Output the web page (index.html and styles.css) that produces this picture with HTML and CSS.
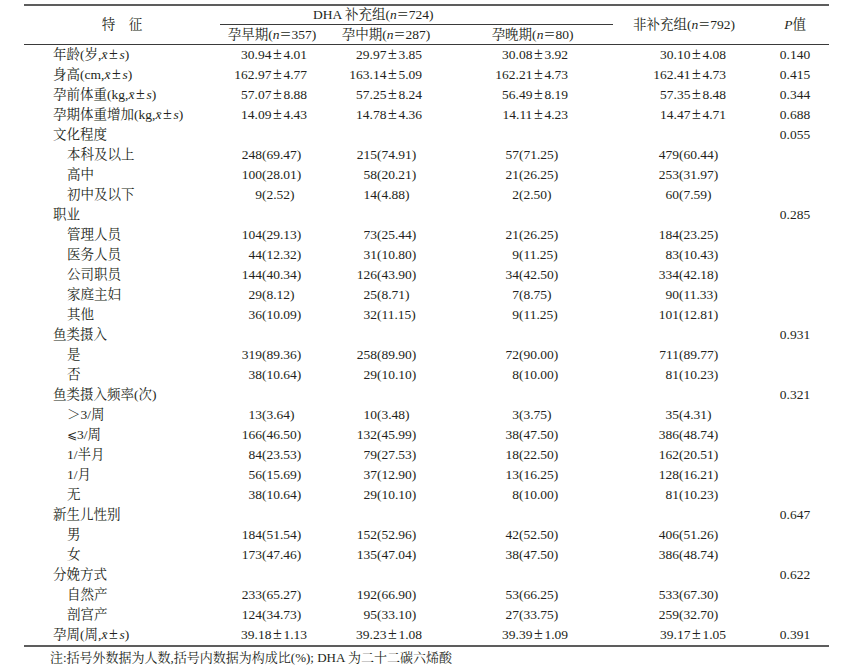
FILE: index.html
```html
<!DOCTYPE html>
<html lang="zh">
<head>
<meta charset="utf-8">
<title>表</title>
<link rel="stylesheet" href="styles.css">
</head>
<body>
<table class="tbl">
  <colgroup>
    <col class="w0"><col class="w1"><col class="w2"><col class="w3"><col class="w4"><col class="w5">
  </colgroup>
  <thead>
    <tr class="h1">
      <th rowspan="2" class="hlabel">特&emsp;征</th>
      <th colspan="3" class="hgroup">DHA 补充组(<i>n</i><span class="eq">＝</span>724)</th>
      <th rowspan="2" class="hcol4">非补充组(<i>n</i><span class="eq">＝</span>792)</th>
      <th rowspan="2" class="hp"><i>P</i>值</th>
    </tr>
    <tr class="h2">
      <th>孕早期(<i>n</i><span class="eq">＝</span>357)</th>
      <th>孕中期(<i>n</i><span class="eq">＝</span>287)</th>
      <th class="hcol3">孕晚期(<i>n</i><span class="eq">＝</span>80)</th>
    </tr>
  </thead>
  <tbody>
    <tr><td class="cat">年龄(岁,<i>x̄</i><span class="pm">±</span><i>s</i>)</td><td class="m c1">30.94<span class="pm">±</span>4.01</td><td class="m c2">29.97<span class="pm">±</span>3.85</td><td class="m c3">30.08<span class="pm">±</span>3.92</td><td class="m c4">30.10<span class="pm">±</span>4.08</td><td class="p">0.140</td></tr>
    <tr><td class="cat">身高(cm,<i>x̄</i><span class="pm">±</span><i>s</i>)</td><td class="m c1">162.97<span class="pm">±</span>4.77</td><td class="m c2">163.14<span class="pm">±</span>5.09</td><td class="m c3">162.21<span class="pm">±</span>4.73</td><td class="m c4">162.41<span class="pm">±</span>4.73</td><td class="p">0.415</td></tr>
    <tr><td class="cat">孕前体重(kg,<i>x̄</i><span class="pm">±</span><i>s</i>)</td><td class="m c1">57.07<span class="pm">±</span>8.88</td><td class="m c2">57.25<span class="pm">±</span>8.24</td><td class="m c3">56.49<span class="pm">±</span>8.19</td><td class="m c4">57.35<span class="pm">±</span>8.48</td><td class="p">0.344</td></tr>
    <tr><td class="cat">孕期体重增加(kg,<i>x̄</i><span class="pm">±</span><i>s</i>)</td><td class="m c1">14.09<span class="pm">±</span>4.43</td><td class="m c2">14.78<span class="pm">±</span>4.36</td><td class="m c3">14.11<span class="pm">±</span>4.23</td><td class="m c4">14.47<span class="pm">±</span>4.71</td><td class="p">0.688</td></tr>

    <tr><td class="cat">文化程度</td><td></td><td></td><td></td><td></td><td class="p">0.055</td></tr>
    <tr><td class="sub">本科及以上</td><td class="n c1"><span class="a">248</span><span>(69.47)</span></td><td class="n c2"><span class="a">215</span><span>(74.91)</span></td><td class="n c3"><span class="a">57</span><span>(71.25)</span></td><td class="n c4"><span class="a">479</span><span>(60.44)</span></td><td></td></tr>
    <tr><td class="sub">高中</td><td class="n c1"><span class="a">100</span><span>(28.01)</span></td><td class="n c2"><span class="a">58</span><span>(20.21)</span></td><td class="n c3"><span class="a">21</span><span>(26.25)</span></td><td class="n c4"><span class="a">253</span><span>(31.97)</span></td><td></td></tr>
    <tr><td class="sub">初中及以下</td><td class="n c1"><span class="a">9</span><span>(2.52)</span></td><td class="n c2"><span class="a">14</span><span>(4.88)</span></td><td class="n c3"><span class="a">2</span><span>(2.50)</span></td><td class="n c4"><span class="a">60</span><span>(7.59)</span></td><td></td></tr>

    <tr><td class="cat">职业</td><td></td><td></td><td></td><td></td><td class="p">0.285</td></tr>
    <tr><td class="sub">管理人员</td><td class="n c1"><span class="a">104</span><span>(29.13)</span></td><td class="n c2"><span class="a">73</span><span>(25.44)</span></td><td class="n c3"><span class="a">21</span><span>(26.25)</span></td><td class="n c4"><span class="a">184</span><span>(23.25)</span></td><td></td></tr>
    <tr><td class="sub">医务人员</td><td class="n c1"><span class="a">44</span><span>(12.32)</span></td><td class="n c2"><span class="a">31</span><span>(10.80)</span></td><td class="n c3"><span class="a">9</span><span>(11.25)</span></td><td class="n c4"><span class="a">83</span><span>(10.43)</span></td><td></td></tr>
    <tr><td class="sub">公司职员</td><td class="n c1"><span class="a">144</span><span>(40.34)</span></td><td class="n c2"><span class="a">126</span><span>(43.90)</span></td><td class="n c3"><span class="a">34</span><span>(42.50)</span></td><td class="n c4"><span class="a">334</span><span>(42.18)</span></td><td></td></tr>
    <tr><td class="sub">家庭主妇</td><td class="n c1"><span class="a">29</span><span>(8.12)</span></td><td class="n c2"><span class="a">25</span><span>(8.71)</span></td><td class="n c3"><span class="a">7</span><span>(8.75)</span></td><td class="n c4"><span class="a">90</span><span>(11.33)</span></td><td></td></tr>
    <tr><td class="sub">其他</td><td class="n c1"><span class="a">36</span><span>(10.09)</span></td><td class="n c2"><span class="a">32</span><span>(11.15)</span></td><td class="n c3"><span class="a">9</span><span>(11.25)</span></td><td class="n c4"><span class="a">101</span><span>(12.81)</span></td><td></td></tr>

    <tr><td class="cat">鱼类摄入</td><td></td><td></td><td></td><td></td><td class="p">0.931</td></tr>
    <tr><td class="sub">是</td><td class="n c1"><span class="a">319</span><span>(89.36)</span></td><td class="n c2"><span class="a">258</span><span>(89.90)</span></td><td class="n c3"><span class="a">72</span><span>(90.00)</span></td><td class="n c4"><span class="a">711</span><span>(89.77)</span></td><td></td></tr>
    <tr><td class="sub">否</td><td class="n c1"><span class="a">38</span><span>(10.64)</span></td><td class="n c2"><span class="a">29</span><span>(10.10)</span></td><td class="n c3"><span class="a">8</span><span>(10.00)</span></td><td class="n c4"><span class="a">81</span><span>(10.23)</span></td><td></td></tr>

    <tr><td class="cat">鱼类摄入频率(次)</td><td></td><td></td><td></td><td></td><td class="p">0.321</td></tr>
    <tr><td class="sub">＞3/周</td><td class="n c1"><span class="a">13</span><span>(3.64)</span></td><td class="n c2"><span class="a">10</span><span>(3.48)</span></td><td class="n c3"><span class="a">3</span><span>(3.75)</span></td><td class="n c4"><span class="a">35</span><span>(4.31)</span></td><td></td></tr>
    <tr><td class="sub"><span class="le">⩽</span>3/周</td><td class="n c1"><span class="a">166</span><span>(46.50)</span></td><td class="n c2"><span class="a">132</span><span>(45.99)</span></td><td class="n c3"><span class="a">38</span><span>(47.50)</span></td><td class="n c4"><span class="a">386</span><span>(48.74)</span></td><td></td></tr>
    <tr><td class="sub">1/半月</td><td class="n c1"><span class="a">84</span><span>(23.53)</span></td><td class="n c2"><span class="a">79</span><span>(27.53)</span></td><td class="n c3"><span class="a">18</span><span>(22.50)</span></td><td class="n c4"><span class="a">162</span><span>(20.51)</span></td><td></td></tr>
    <tr><td class="sub">1/月</td><td class="n c1"><span class="a">56</span><span>(15.69)</span></td><td class="n c2"><span class="a">37</span><span>(12.90)</span></td><td class="n c3"><span class="a">13</span><span>(16.25)</span></td><td class="n c4"><span class="a">128</span><span>(16.21)</span></td><td></td></tr>
    <tr><td class="sub">无</td><td class="n c1"><span class="a">38</span><span>(10.64)</span></td><td class="n c2"><span class="a">29</span><span>(10.10)</span></td><td class="n c3"><span class="a">8</span><span>(10.00)</span></td><td class="n c4"><span class="a">81</span><span>(10.23)</span></td><td></td></tr>

    <tr><td class="cat">新生儿性别</td><td></td><td></td><td></td><td></td><td class="p">0.647</td></tr>
    <tr><td class="sub">男</td><td class="n c1"><span class="a">184</span><span>(51.54)</span></td><td class="n c2"><span class="a">152</span><span>(52.96)</span></td><td class="n c3"><span class="a">42</span><span>(52.50)</span></td><td class="n c4"><span class="a">406</span><span>(51.26)</span></td><td></td></tr>
    <tr><td class="sub">女</td><td class="n c1"><span class="a">173</span><span>(47.46)</span></td><td class="n c2"><span class="a">135</span><span>(47.04)</span></td><td class="n c3"><span class="a">38</span><span>(47.50)</span></td><td class="n c4"><span class="a">386</span><span>(48.74)</span></td><td></td></tr>

    <tr><td class="cat">分娩方式</td><td></td><td></td><td></td><td></td><td class="p">0.622</td></tr>
    <tr><td class="sub">自然产</td><td class="n c1"><span class="a">233</span><span>(65.27)</span></td><td class="n c2"><span class="a">192</span><span>(66.90)</span></td><td class="n c3"><span class="a">53</span><span>(66.25)</span></td><td class="n c4"><span class="a">533</span><span>(67.30)</span></td><td></td></tr>
    <tr><td class="sub">剖宫产</td><td class="n c1"><span class="a">124</span><span>(34.73)</span></td><td class="n c2"><span class="a">95</span><span>(33.10)</span></td><td class="n c3"><span class="a">27</span><span>(33.75)</span></td><td class="n c4"><span class="a">259</span><span>(32.70)</span></td><td></td></tr>

    <tr><td class="cat">孕周(周,<i>x̄</i><span class="pm">±</span><i>s</i>)</td><td class="m c1">39.18<span class="pm">±</span>1.13</td><td class="m c2">39.23<span class="pm">±</span>1.08</td><td class="m c3">39.39<span class="pm">±</span>1.09</td><td class="m c4">39.17<span class="pm">±</span>1.05</td><td class="p">0.391</td></tr>
  </tbody>
</table>
<p class="note">注:括号外数据为人数,括号内数据为构成比(%); DHA 为二十二碳六烯酸</p>
</body>
</html>
```

FILE: styles.css
```css
html, body {
  margin: 0;
  padding: 0;
  background: #ffffff;
}

body {
  font-family: "Liberation Serif", "Noto Serif CJK SC", "Noto Sans CJK SC", serif;
  font-size: 13.5px;
  color: #231f20;
}

.tbl {
  margin: 4px 0 0 24px;
  width: 805px;
  table-layout: fixed;
  border-collapse: collapse;
  border-top: 2px solid #5d5d5d;
  border-bottom: 2px solid #5d5d5d;
}

.w0 { width: 196px; }
.w1 { width: 104px; }
.w2 { width: 124px; }
.w3 { width: 165px; }
.w4 { width: 148px; }
.w5 { width: 68px; }

th, td {
  padding: 0;
  font-weight: normal;
  white-space: nowrap;
}

thead {
  border-bottom: 1px solid #3a3a3a;
}

.h1 th {
  height: 18px;
  line-height: 18px;
}

.h2 th {
  height: 19px;
  line-height: 19px;
  text-align: center;
}

.hgroup {
  text-align: left;
  padding-left: 93px;
  border-bottom: 1px solid #3a3a3a;
}

.hlabel,
.hcol4,
.hp {
  text-align: center;
  vertical-align: middle;
}

.hcol3 {
  padding-left: 4px;
}

.hcol4 {
  padding-right: 6px;
}

/* wide plus-minus and equals signs, as in the typeset table */
.pm {
  display: inline-block;
  width: 12px;
  line-height: 1;
  text-align: center;
  font-size: 16px;
}

.eq {
  display: inline-block;
  width: 12px;
  line-height: 1;
  text-align: center;
  font-family: "Noto Sans CJK SC", sans-serif;
  font-size: 12px;
}

tbody td {
  height: 20px;
  line-height: 20px;
}

.cat {
  padding-left: 29px;
}

.sub {
  padding-left: 43px;
}

.le {
  font-family: "DejaVu Serif", "DejaVu Sans", serif;
  font-size: 12px;
}

.m {
  text-align: right;
}

.m.c1 { padding-right: 17px; }
.m.c2 { padding-right: 26px; }
.m.c3 { padding-right: 45px; }
.m.c4 { padding-right: 35px; }

.n .a {
  display: inline-block;
  width: 24px;
  text-align: right;
}

.n.c1 { padding-left: 18px; }
.n.c2 { padding-left: 29px; }
.n.c3 { padding-left: 47px; }
.n.c4 { padding-left: 42px; }

.p {
  text-align: center;
}

.note {
  margin: 2px 0 0 50px;
  font-size: 13px;
  line-height: 18px;
}
```
